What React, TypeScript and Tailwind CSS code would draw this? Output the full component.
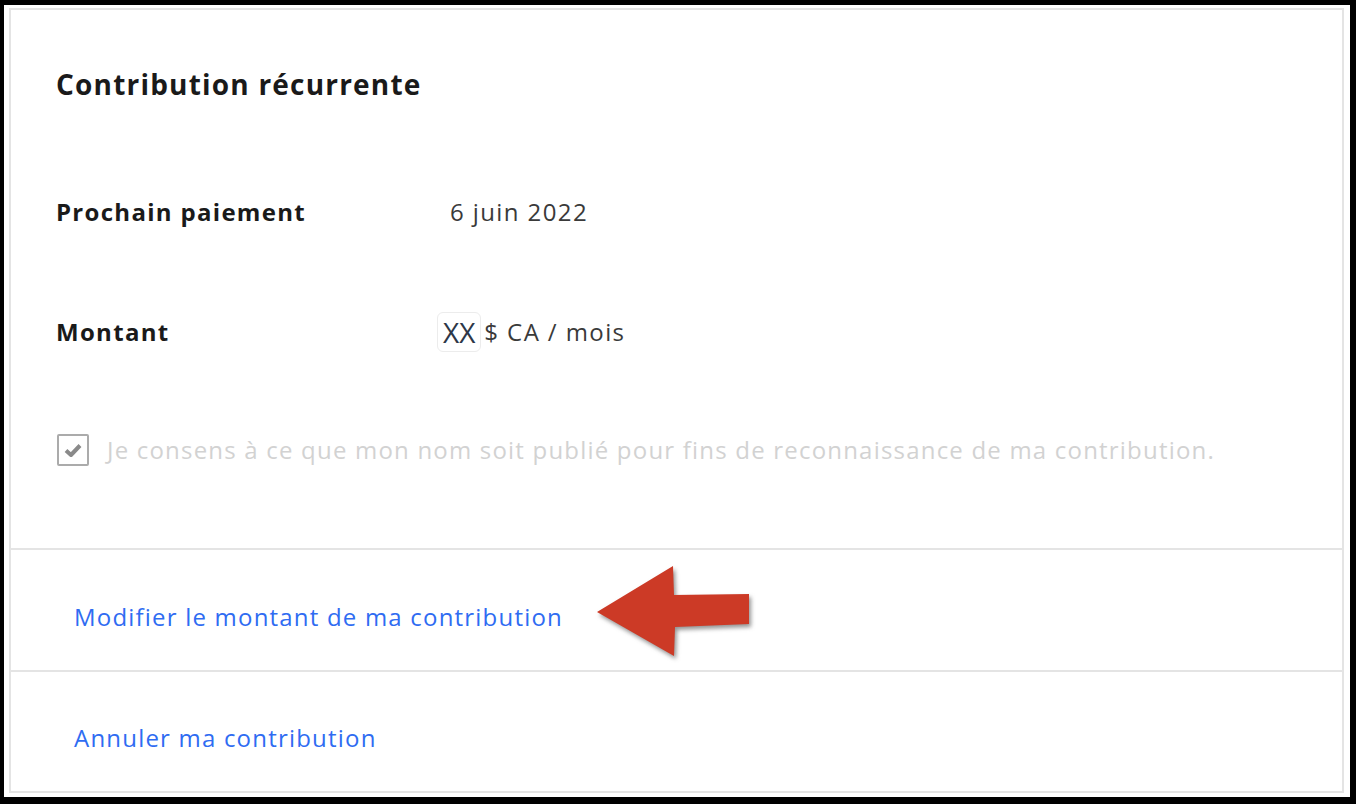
const Arrow = () => (
  <svg
    className="absolute left-[590px] top-[560px]"
    width="170"
    height="110"
    viewBox="0 0 170 110"
    style={{ filter: "drop-shadow(2px 3px 2px rgba(60,60,60,0.55))" }}
  >
    <polygon
      points="7,52 83,6 84,35 159,34 159,64 85,67 84,96"
      fill="#cc3a26"
    />
  </svg>
)

const Row = ({ label, children, className }: { label: string; children: React.ReactNode; className: string }) => (
  <div className={`flex items-center h-[52px] ${className}`}>
    <div className="w-[382px] text-[24px] tracking-[1.3px] font-bold text-[#1a1a1a]">{label}</div>
    <div className="flex items-center text-[24px] tracking-[1.4px] text-[#3a3a3a]">{children}</div>
  </div>
)

export default function App() {
  return (
    <div
      className="relative w-[1356px] h-[804px] bg-black pl-[4px] pt-[5px] pr-[6px] pb-[7px]"
      style={{ fontFamily: '"Open Sans", "Noto Sans", sans-serif' }}
    >
      <div className="h-full bg-white pl-[5px] pt-[3px] pr-[6px] pb-[4px]">
        <div className="h-full flex flex-col border-2 border-[#e4e4e4] bg-white">
          {/* summary */}
          <div className="pl-[45px] pt-[48px] pb-[72px]">
            <h1 className="text-[28px] tracking-[1.2px] leading-[52px] font-bold text-[#1a1a1a]">Contribution récurrente</h1>

            <Row label="Prochain paiement" className="mt-[76px]">
              <span className="pl-[12px]">6 juin 2022</span>
            </Row>

            <Row label="Montant" className="mt-[68px]">
              <span className="ml-[-1px] px-[5px] text-[28px] tracking-[0px] leading-[38px] rounded-md border border-[#ececec] text-[#2d3748]">XX</span>
              <span className="ml-[3px]">$ CA / mois</span>
            </Row>

            <div className="flex items-center h-[52px] mt-[66px] gap-[18px]">
              <div className="w-[32px] h-[32px] ml-[1px] flex items-center justify-center border-2 border-[#ababab] rounded-[2px] bg-white">
                <svg width="20" height="16" viewBox="0 0 20 16">
                  <path d="M3 8.5 L8 13 L17 3.5" stroke="#8a8a8a" strokeWidth="4" fill="none" strokeLinejoin="round" />
                </svg>
              </div>
              <span className="text-[24px] tracking-[1.2px] text-[#d2d2d2]">
                Je consens à ce que mon nom soit publié pour fins de reconnaissance de ma contribution.
              </span>
            </div>
          </div>

          {/* actions */}
          <div className="border-t-2 border-[#e4e4e4] pl-[63px] pt-[52px] pb-[38px]">
            <a className="text-[24px] tracking-[1.2px] leading-[30px] text-[#2f6cf2]">Modifier le montant de ma contribution</a>
          </div>
          <div className="flex-1 border-t-2 border-[#e4e4e4] pl-[63px] pt-[51px]">
            <a className="text-[24px] tracking-[1.2px] leading-[30px] text-[#2f6cf2]">Annuler ma contribution</a>
          </div>
        </div>
      </div>
      <Arrow />
    </div>
  )
}
